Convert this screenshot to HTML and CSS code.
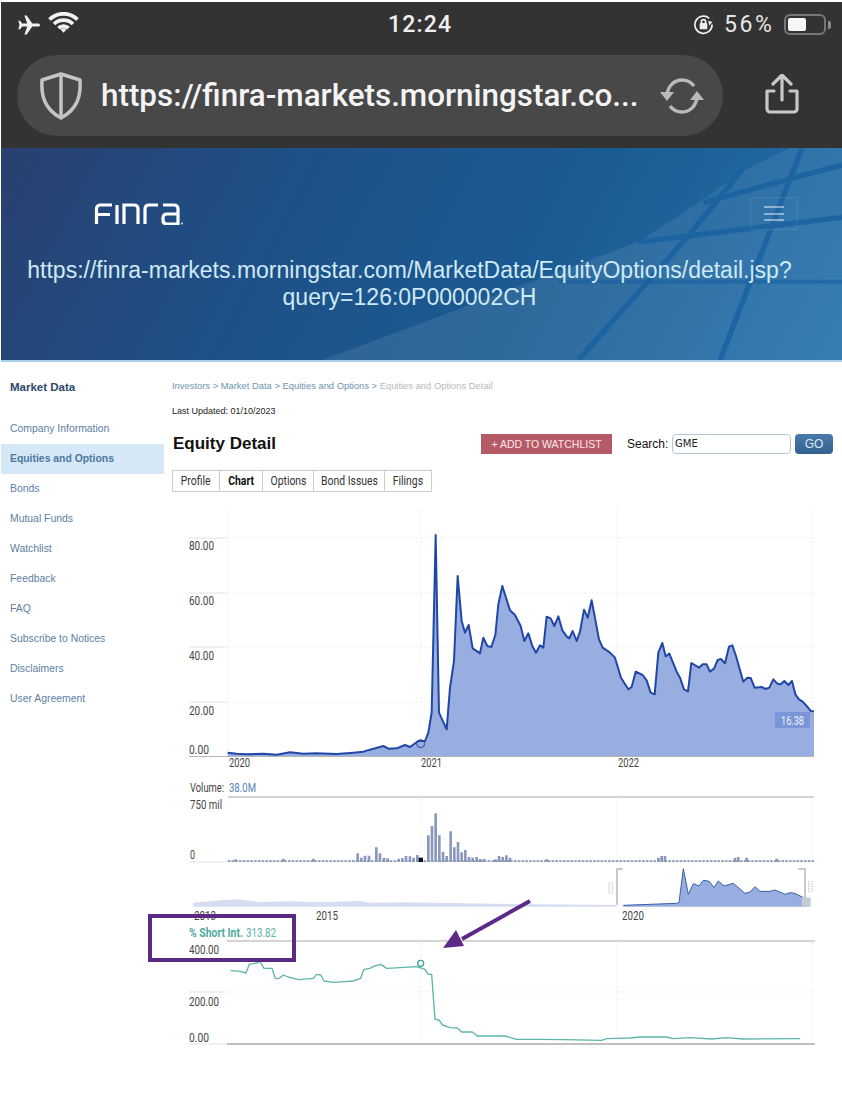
FILE: index.html
```html
<!DOCTYPE html>
<html lang="en">
<head>
<meta charset="utf-8">
<title>FINRA Equity Detail</title>
<link rel="stylesheet" href="styles.css">
</head>
<body>
<div class="page">
  <header class="browser">
    <div class="status">
      <div class="status-left">
        <svg class="ic-plane" viewBox="0 0 24 20"><path d="M23.500 10c0-1-1-1.600-2.200-1.600h-5.600L10.200.4H7.900l2.900 8H5.600L3.600 5.800H1.800L3 10 1.800 14.200h1.800l2-2.600h5.200l-2.900 8h2.300l5.500-8h5.600c1.200 0 2.200-.6 2.200-1.600z"/></svg>
        <svg class="ic-wifi" viewBox="0 0 31 21"><path d="M1.500 7.500a20 20 0 0 1 28 0M6 12a13.600 13.600 0 0 1 19 0M10.500 16.200a7 7 0 0 1 10 0"/><path class="wifi-dot" d="M12.600 17.600a4 4 0 0 1 5.800 0l-2.900 3.200z"/></svg>
      </div>
      <div class="clock">12:24</div>
      <div class="status-right">
        <svg class="ic-lock" viewBox="0 0 22 22"><path d="M17 4.500A9 9 0 1 0 20 11"/><path class="lock-tip" d="M20.500 8.500 17 12l-1-5z"/><rect class="lock-body" x="7" y="9.500" width="8" height="6.500" rx="1"/><path d="M8.800 9.500V8a2.200 2.200 0 0 1 4.400 0v1.500"/></svg>
        <span class="pct">56%</span>
        <div class="battery"><div class="battery-fill"></div></div>
        <div class="battery-tip"></div>
      </div>
    </div>
    <div class="urlrow">
      <div class="pill">
        <svg class="ic-shield" viewBox="0 0 44 48"><path d="M22 2 41 8c1 15-2 29-19 38C5 37 2 23 3 8zM22 2v44"/></svg>
        <span class="url">https://finra-markets.morningstar.co...</span>
        <svg class="ic-reload" viewBox="0 0 46 36"><path d="M8 17C9 8 15 2 23 2c5 0 9 2 12 6M38 19c-1 9-7 15-15 15-5 0-9-2-12-6"/><path class="fillg" d="M1 14h14l-7 9zM31 22h14l-7-9z"/></svg>
      </div>
      <svg class="ic-share" viewBox="0 0 34 40"><path d="M17 26V2M8 10l9-9 9 9M9 17H2v18a3 3 0 0 0 3 3h24a3 3 0 0 0 3-3V17h-7"/></svg>
    </div>
  </header>

  <section class="hero">
    <svg class="hero-art" viewBox="0 0 842 214" preserveAspectRatio="none">
      <polygon class="art-light" points="322,214 637,95 842,70 842,214"/>
      <polygon class="art-light2" points="637,95 680,68 745,22 790,0 842,0 842,70"/>
      <path class="art-band" d="M578 214 687 90 742 22M720 214 802 0M637 95 842 70M703 55 842 17"/>
      <path class="art-band art-band-soft" d="M558 135H842"/>
    </svg>
    <div class="hero-top">
      <svg class="logo" role="img" aria-label="FINRA" viewBox="0 0 90 22"><path d="M2.500 21V6q0-4 4-4H18M2.500 11.500H16M23 2V21M30 21V2H40q4 0 4 4V21M51 21V6q0-4 4-4H64M69 2H80q4 0 4 4V21H73q-4 0-4-4V15q0-4 4-4H84"/><circle class="logo-dot" cx="88" cy="20.500" r="1"/></svg>
      <button class="burger" aria-label="Menu"><i></i><i></i><i></i></button>
    </div>
    <p class="hero-url">https://finra-markets.morningstar.com/MarketData/EquityOptions/detail.jsp?<br>query=126:0P000002CH</p>
  </section>

  <div class="content">
    <nav class="side">
      <h3 class="side-title">Market Data</h3>
      <ul class="side-list">
        <li class="side-item">Company Information</li>
        <li class="side-item is-active">Equities and Options</li>
        <li class="side-item">Bonds</li>
        <li class="side-item">Mutual Funds</li>
        <li class="side-item">Watchlist</li>
        <li class="side-item">Feedback</li>
        <li class="side-item">FAQ</li>
        <li class="side-item">Subscribe to Notices</li>
        <li class="side-item">Disclaimers</li>
        <li class="side-item">User Agreement</li>
      </ul>
    </nav>
    <main class="main">
      <div class="crumbs">Investors &gt; Market Data &gt; Equities and Options &gt; <span class="crumb-last">Equities and Options Detail</span></div>
      <div class="updated">Last Updated: 01/10/2023</div>
      <div class="title-row">
        <h1 class="title">Equity Detail</h1>
        <button class="watch">+ ADD TO WATCHLIST</button>
        <label class="search-label">Search:</label>
        <div class="search-input">GME</div>
        <button class="go">GO</button>
      </div>
      <div class="tabs">
        <div class="tab t1"><span>Profile</span></div>
        <div class="tab t2 is-on"><span>Chart</span></div>
        <div class="tab t3"><span>Options</span></div>
        <div class="tab t4"><span>Bond Issues</span></div>
        <div class="tab t5"><span>Filings</span></div>
      </div>
      <div class="chart-wrap">
      <svg class="chart" viewBox="172 500 670 560">
        <!-- grid -->
        <path class="grid" d="M228 508V755M421 508V755M617 508V755M812 508V755M228 537H814M228 592H814M228 646H814M228 701H814"/>
        <path class="tick" d="M189 537H226M189 592H226M189 646H226M189 701H226"/>
        <g transform="translate(170 510) scale(.33333)">
          <path class="price-fill" d="M173 736V725L200 728 230 730 280 728 320 731 360 724 400 728 440 727 500 729 550 725 580 722 600 716 640 705 655 713 680 712 705 702 720 708 745 690 765 690 775 665 785 605 797 72 807 605 830 655 840 530 852 450 863 195 875 330 885 365 896 342 908 412 930 427 940 380 952 405 964 408 976 372 985 280 997 225 1020 298 1035 312 1052 345 1063 390 1075 367 1087 405 1098 425 1110 403 1120 410 1130 317 1142 322 1153 345 1165 316 1177 358 1190 376 1198 382 1208 360 1220 390 1230 362 1242 296 1253 320 1265 268 1287 385 1298 410 1320 425 1335 440 1353 500 1375 535 1385 528 1397 482 1418 492 1430 508 1442 545 1454 550 1465 425 1477 396 1487 436 1498 428 1520 482 1530 500 1542 535 1554 541 1564 456 1587 470 1598 460 1610 460 1620 482 1632 473 1643 447 1653 444 1665 457 1677 407 1687 403 1698 435 1710 478 1720 512 1732 500 1742 501 1754 530 1775 528 1787 534 1798 530 1810 505 1822 518 1832 520 1843 510 1855 522 1866 510 1876 550 1887 565 1898 572 1910 585 1922 600 1932 601V736z"/>
          <path class="price-line" d="M173 725L200 728 230 730 280 728 320 731 360 724 400 728 440 727 500 729 550 725 580 722 600 716 640 705 655 713 680 712 705 702 720 708 745 690 765 690 775 665 785 605 797 72 807 605 830 655 840 530 852 450 863 195 875 330 885 365 896 342 908 412 930 427 940 380 952 405 964 408 976 372 985 280 997 225 1020 298 1035 312 1052 345 1063 390 1075 367 1087 405 1098 425 1110 403 1120 410 1130 317 1142 322 1153 345 1165 316 1177 358 1190 376 1198 382 1208 360 1220 390 1230 362 1242 296 1253 320 1265 268 1287 385 1298 410 1320 425 1335 440 1353 500 1375 535 1385 528 1397 482 1418 492 1430 508 1442 545 1454 550 1465 425 1477 396 1487 436 1498 428 1520 482 1530 500 1542 535 1554 541 1564 456 1587 470 1598 460 1610 460 1620 482 1632 473 1643 447 1653 444 1665 457 1677 407 1687 403 1698 435 1710 478 1720 512 1732 500 1742 501 1754 530 1775 528 1787 534 1798 530 1810 505 1822 518 1832 520 1843 510 1855 522 1866 510 1876 550 1887 565 1898 572 1910 585 1922 600 1932 601"/>
          <circle class="price-mark" cx="752" cy="698" r="12"/>
        </g>
        <path class="axis" d="M189 755.500H814"/>
        <rect class="last-box" x="775" y="711" width="35" height="16"/>
        <text class="lab last-text" x="781" y="724" textLength="23" lengthAdjust="spacingAndGlyphs">16.38</text>
        <text class="lab" x="189" y="549" textLength="25" lengthAdjust="spacingAndGlyphs">80.00</text>
        <text class="lab" x="189" y="604" textLength="25" lengthAdjust="spacingAndGlyphs">60.00</text>
        <text class="lab" x="189" y="659" textLength="25" lengthAdjust="spacingAndGlyphs">40.00</text>
        <text class="lab" x="189" y="714" textLength="25" lengthAdjust="spacingAndGlyphs">20.00</text>
        <text class="lab" x="189" y="753" textLength="20" lengthAdjust="spacingAndGlyphs">0.00</text>
        <text class="lab" x="229" y="766" textLength="21" lengthAdjust="spacingAndGlyphs">2020</text>
        <text class="lab" x="421" y="766" textLength="21" lengthAdjust="spacingAndGlyphs">2021</text>
        <text class="lab" x="618" y="766" textLength="21" lengthAdjust="spacingAndGlyphs">2022</text>

        <!-- volume -->
        <text class="lab" x="190" y="791" textLength="34" lengthAdjust="spacingAndGlyphs">Volume:</text>
        <text class="lab vol-val" x="229" y="791" textLength="27" lengthAdjust="spacingAndGlyphs">38.0M</text>
        <path class="rule" d="M228 796H814"/>
        <path class="grid" d="M421 797V860M617 797V860M812 797V860"/>
        <text class="lab" x="190" y="808" textLength="32" lengthAdjust="spacingAndGlyphs">750 mil</text>
        <text class="lab" x="190" y="858" textLength="5" lengthAdjust="spacingAndGlyphs">0</text>
        <path class="tick" d="M189 861H226"/>
        <g transform="translate(170 775) scale(.33333)">
          <path class="vol-low" d="M173 255.500H1932"/>
          <path class="vol-bar" d="M197 258V250M340 258V248M430 258V248M563 258V232M574 258V245M585 258V239M597 258V239M619 258V214M630 258V232M642 258V245M653 258V247M686 258V248M697 258V247M708 258V240M720 258V241M731 258V245M742 258V237M775 258V178M786 258V150M797 258V112M808 258V178M819 258V227M830 258V240M842 258V166M853 258V214M864 258V198M875 258V229M886 258V222M897 258V243M908 258V245M920 258V243M931 258V249M942 258V249M976 258V250M987 258V240M998 258V243M1009 258V238M1020 258V245M1130 258V250M1465 258V245M1475 258V240M1485 258V240M1695 258V245M1705 258V243M1730 258V245M1820 258V248"/>
          <rect class="vol-mark" x="746" y="245" width="13" height="13"/>
          <path class="nav-light" d="M70 380 120 376 160 372 205 370 240 374 270 378 360 376 450 379 570 375 600 380 700 379 1020 384 1340 387V392H70z"/>
          <path class="nav-fill" d="M1360 388 1520 382 1527 380 1540 278 1555 355 1570 323 1587 330 1600 313 1618 316 1632 335 1645 315 1662 330 1690 322 1725 352 1740 348 1755 332 1770 346 1800 346 1815 342 1845 355 1860 350 1875 352 1900 365 1920 366V392H1360z"/>
          <path class="nav-line" d="M1360 388 1520 382 1527 380 1540 278 1555 355 1570 323 1587 330 1600 313 1618 316 1632 335 1645 315 1662 330 1690 322 1725 352 1740 348 1755 332 1770 346 1800 346 1815 342 1845 355 1860 350 1875 352 1900 365"/>
          <rect class="nav-end" x="1895" y="365" width="27" height="27"/>
          <path class="nav-bracket" d="M1358 279H1341V386M1885 279H1905V386"/>
          <path class="nav-grip" d="M1317 320V352M1327 320V352M1916 316V348M1926 316V348"/>
        </g>
        <text class="lab" x="194" y="919" textLength="22" lengthAdjust="spacingAndGlyphs">2013</text>
        <text class="lab" x="316" y="919" textLength="22" lengthAdjust="spacingAndGlyphs">2015</text>
        <text class="lab" x="622" y="919" textLength="22" lengthAdjust="spacingAndGlyphs">2020</text>

        <!-- short interest -->
        <text class="lab short-b" x="189" y="936" textLength="54" lengthAdjust="spacingAndGlyphs">% Short Int.</text>
        <text class="lab short" x="246" y="936" textLength="30" lengthAdjust="spacingAndGlyphs">313.82</text>
        <path class="rule" d="M227 940H815"/>
        <path class="grid" d="M421 941V1042M617 941V1042M812 941V1042M227 991H815"/>
        <text class="lab" x="189" y="953" textLength="30" lengthAdjust="spacingAndGlyphs">400.00</text>
        <text class="lab" x="189" y="1005" textLength="30" lengthAdjust="spacingAndGlyphs">200.00</text>
        <text class="lab" x="189" y="1041" textLength="20" lengthAdjust="spacingAndGlyphs">0.00</text>
        <path class="tick" d="M189 991H226M189 1043H226"/>
        <path class="rule rule-b" d="M227 1043H815"/>
        <g transform="translate(140 890) scale(.33333)">
          <path class="short-line" d="M272 239 300 241 318 246 328 220 350 216 360 212 372 232 396 232 406 263 418 262 430 252 445 258 475 266 520 262 530 250 542 252 552 270 580 274 640 270 662 262 672 235 690 232 700 226 722 220 740 232 830 227 855 235 865 250 875 250 885 385 897 387 908 402 930 410 952 411 965 423 997 423 1012 435 1095 435 1130 445 1200 445 1270 446 1385 448 1400 443 1470 441 1500 438 1580 438 1600 443 1650 440 1715 444 1760 440 1810 444 1980 443"/>
          <circle class="short-mark" cx="842" cy="217" r="9"/>
        </g>
      </svg>
      <div class="note-box"></div>
      <svg class="note-arrow" viewBox="0 0 100 60"><path class="arrow-line" d="M88 2 20 40"/><path class="arrow-head" d="M1 49 14 31 22 47z"/></svg>
      </div>
    </main>
  </div>
</div>
</body>
</html>
```
FILE: styles.css
```css
* { box-sizing: border-box; }
html, body { margin: 0; padding: 0; background: #fff; }
.page { width: 842px; height: 1118px; overflow: hidden; position: relative; font-family: "Liberation Sans", Arial, sans-serif; }

/* browser chrome */
.browser { height: 148px; margin: 2px 0 0 1px; background: #333; color: #eee; }
.status { height: 50px; display: flex; align-items: center; justify-content: space-between; padding: 0 11px 5px 15px; position: relative; }
.status-left { display: flex; align-items: center; gap: 7px; }
.ic-plane { width: 25px; height: 20px; fill: #f2f2f2; }
.ic-wifi { width: 31px; height: 21px; fill: none; stroke: #f2f2f2; stroke-width: 3.800; margin-top: -5px; }
.wifi-dot { fill: #f2f2f2; stroke: none; }
.clock { position: absolute; left: 387px; top: 9px; font: 500 23px/28px Roboto, sans-serif; letter-spacing: 1.200px; color: #f0f0f0; }
.status-right { display: flex; align-items: center; }
.ic-lock { width: 21px; height: 21px; fill: none; stroke: #eee; stroke-width: 1.800; margin-right: 10px; }
.lock-tip, .lock-body { fill: #eee; stroke: none; }
.pct { font: 400 23px/28px Roboto, sans-serif; letter-spacing: 2.600px; color: #e6e6e6; width: 60px; }
.battery { width: 42px; height: 21px; border: 2px solid #777; border-radius: 6px; padding: 2px; }
.battery-fill { width: 18px; height: 100%; background: #f7f7f7; border-radius: 2px; }
.battery-tip { width: 3px; height: 8px; background: #8b8b8b; border-radius: 0 2px 2px 0; margin-left: 2px; }

.urlrow { height: 96px; display: flex; align-items: flex-start; padding: 3px 0 0 16px; }
.pill { width: 706px; height: 81px; border-radius: 40px; background: #484848; display: flex; align-items: center; padding: 0 18px 0 22px; }
.ic-shield { width: 44px; height: 48px; fill: none; stroke: #c4c4c4; stroke-width: 3.500; stroke-linejoin: round; flex: none; }
.url { font: 500 31.400px/40px Roboto, sans-serif; color: #f4f4f4; margin-left: 18px; white-space: nowrap; flex: 1; }
.ic-reload { width: 46px; height: 36px; fill: none; stroke: #b9b9b9; stroke-width: 3.500; flex: none; }
.fillg { fill: #b9b9b9; stroke: none; }
.ic-share { width: 34px; height: 40px; margin: 19px 0 0 42px; fill: none; stroke: #c8c8c8; stroke-width: 3.200; stroke-linejoin: round; stroke-linecap: round; }

/* hero */
.hero { height: 214px; margin: -2px 0 0 1px; position: relative; overflow: hidden; background: linear-gradient(118deg, #29406f 0%, #1f4f86 30%, #1b5a92 62%, #2272ad 100%); border-bottom: 2px solid #a9d2ea; }
.hero-art { position: absolute; left: 0; top: 0; width: 100%; height: 100%; }
.art-light { fill: rgba(255,255,255,.09); }
.art-light2 { fill: rgba(255,255,255,.08); }
.art-band { fill: none; stroke: rgba(24,96,160,.8); stroke-width: 5.500; }
.art-band-soft { stroke: rgba(24,96,160,.6); stroke-width: 4; }
.hero-top { position: relative; height: 86px; display: flex; justify-content: space-between; padding: 49px 44px 0 93px; }
.logo { width: 90px; height: 22px; margin-top: 6px; fill: none; stroke: #fff; stroke-width: 3.200; }
.logo-dot { fill: #bfe3f2; stroke: none; }
.burger { width: 48px; height: 33px; background: rgba(255,255,255,.01); border: 1px solid rgba(255,255,255,.09); border-radius: 3px; padding: 8px 13px; margin: 0; display: flex; flex-direction: column; justify-content: space-between; }
.burger i { display: block; height: 2px; background: rgba(255,255,255,.45); }
.hero-url { position: relative; margin: 23px 0 0; font-size: 23px; line-height: 27px; text-align: center; color: #cfe9f6; padding-right: 24px; white-space: nowrap; }

/* content */
.content { display: flex; }
.side { width: 163px; margin-left: 1px; flex: none; }
.side-title { margin: 18px 0 0 9px; font-size: 11.500px; line-height: 14px; font-weight: 700; color: #2b4a6b; }
.side-list { list-style: none; margin: 20px 0 0; padding: 0; }
.side-item { height: 30px; line-height: 30px; padding-left: 9px; font-size: 10.400px; color: #5d80a3; }
.side-item.is-active { background: #d6e8f7; font-weight: 700; color: #4a78a3; }

.main { flex: 1; min-width: 0; padding-left: 8px; }
.crumbs { margin-top: 18px; font-size: 9.400px; line-height: 12px; color: #6e94b1; }
.crumb-last { color: #b9b9b9; }
.updated { margin-top: 13px; font-size: 9px; line-height: 12px; color: #222; }
.title-row { height: 20px; margin-top: 17px; display: flex; align-items: center; }
.title { margin: 0 0 0 1px; width: 308px; font-size: 17px; line-height: 20px; font-weight: 700; color: #111; }
.watch { width: 131px; height: 20px; padding: 0; border: 0; background: #b65a67; color: #fae8ea; font: 10.500px "Liberation Sans", sans-serif; }
.search-label { margin-left: 15px; font-size: 12px; color: #111; width: 45px; }
.search-input { width: 119px; height: 20px; border: 1px solid #b4c6de; border-radius: 4px; padding-left: 2px; font: 10px/18px "DejaVu Sans", sans-serif; color: #222; }
.go { width: 38px; height: 20px; margin-left: 4px; padding: 0; border: 0; border-radius: 4px; background: linear-gradient(#487aac, #35628f); color: #dce8f3; font: 12px "Liberation Sans", sans-serif; }
.tabs { display: flex; height: 22px; margin-top: 16px; width: 260px; border: 1px solid #ccc; }
.tab { border-right: 1px solid #ccc; font: 13px/20px Roboto, sans-serif; color: #333; display: flex; justify-content: center; }
.tab span { display: block; transform: scaleX(.8); white-space: nowrap; }
.tab:last-child { border-right: 0; }
.tab.is-on { font-weight: 700; color: #111; }
.t1 { width: 47px; } .t2 { width: 43px; } .t3 { width: 51px; } .t4 { width: 71px; } .t5 { width: 46px; }

/* chart */
.chart-wrap { position: relative; margin-top: 9px; }
.chart { display: block; width: 670px; height: 560px; overflow: visible; }
.grid { fill: none; stroke: #efefef; stroke-width: 1; stroke-dasharray: 2 2; }
.tick { fill: none; stroke: #e2e2e2; stroke-width: 1; }
.axis { fill: none; stroke: #b5b5b5; stroke-width: 1; }
.rule { fill: none; stroke: #aaa; stroke-width: 1.200; }
.rule-b { stroke: #c0c0c0; stroke-width: 2; }
.lab { font: 13px Roboto, sans-serif; fill: #444; }
.lab.vol-val { fill: #5c82bb; }
.price-fill { fill: #98aee0; }
.price-line { fill: none; stroke: #2147a6; stroke-width: 6; stroke-linejoin: round; }
.price-mark { fill: none; stroke: #2147a6; stroke-width: 3; }
.last-box { fill: #7a96d8; }
.lab.last-text { fill: #eef2fb; }
.vol-low { fill: none; stroke: #8a96b4; stroke-width: 5; stroke-dasharray: 8 3.300; }
.vol-bar { fill: none; stroke: #8a98bb; stroke-width: 8; }
.vol-mark { fill: #111; }
.nav-light { fill: #d6ddf2; }
.nav-fill { fill: #98aee0; }
.nav-line { fill: none; stroke: #3a5ea8; stroke-width: 3; }
.nav-end { fill: #c6cbd8; }
.nav-bracket { fill: none; stroke: #c9c9c9; stroke-width: 6; }
.nav-grip { fill: none; stroke: #c9c9c9; stroke-width: 4; stroke-dasharray: 4 3; }
.lab.short { fill: #5fb5aa; }
.lab.short-b { font-weight: 700; fill: #4fa99e; }
.short-line { fill: none; stroke: #5fb5aa; stroke-width: 4; stroke-linejoin: round; }
.short-mark { fill: none; stroke: #3fa497; stroke-width: 4; }

/* annotation laid over the chart */
.note-box { position: absolute; left: -24px; top: 413px; width: 148px; height: 48px; border: 4px solid #5b2a86; }
.note-arrow { position: absolute; left: 270px; top: 398px; width: 100px; height: 60px; }
.arrow-line { fill: none; stroke: #5b2a86; stroke-width: 4; }
.arrow-head { fill: #5b2a86; }
```
